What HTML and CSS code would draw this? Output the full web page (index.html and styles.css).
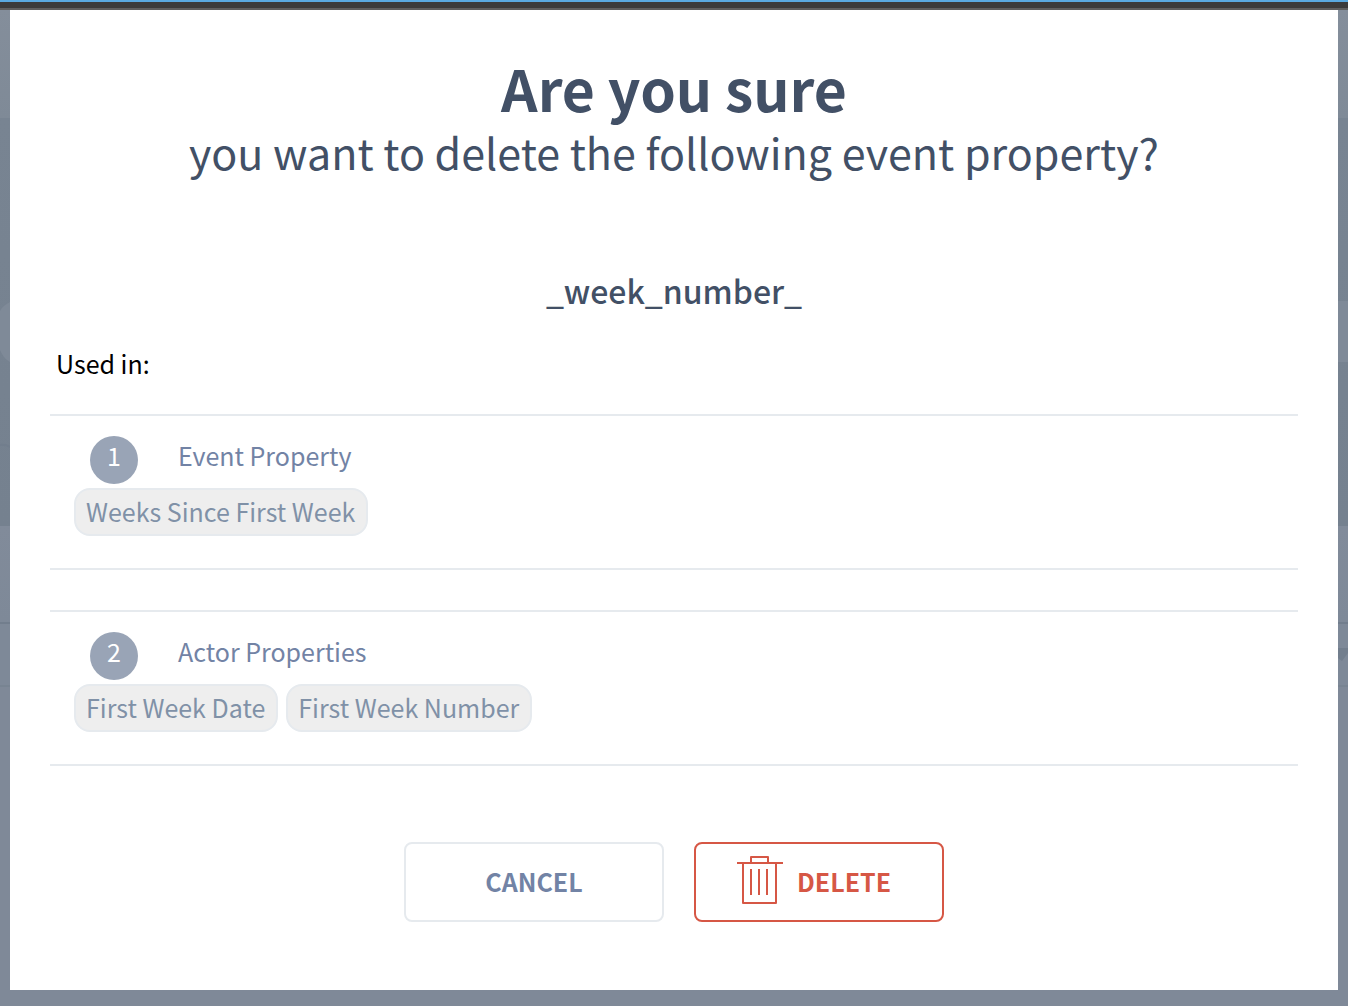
FILE: index.html
```html
<!DOCTYPE html>
<html lang="en">
<head>
<meta charset="utf-8">
<meta name="viewport" content="width=device-width, initial-scale=1">
<title>Delete event property</title>
<link rel="stylesheet" href="styles.css">
</head>
<body>
<div class="topbar"></div>
<div class="backdrop">
  <svg class="edge" viewBox="0 0 10 700" width="10" height="700" aria-hidden="true">
    <path fill="#7f8a98" d="M10 292C6 294 2 297 0 301V340C2 345 6 350 10 352Z"/>
    <path fill="none" stroke="#727e8d" stroke-width="2" d="M0 435Q5 434 10 437"/>
  </svg>
  <main class="dialog" role="dialog" aria-labelledby="dialog-title">
    <h1 class="title" id="dialog-title">Are you sure</h1>
    <p class="subtitle">you want to delete the following event property?</p>
    <h2 class="property">_week_number_</h2>
    <p class="used-in">Used in:</p>
    <section class="usage">
      <div class="usage-head">
        <span class="count">1</span>
        <h3 class="usage-name">Event Property</h3>
      </div>
      <ul class="tags">
        <li class="tag">Weeks Since First Week</li>
      </ul>
    </section>
    <section class="usage">
      <div class="usage-head">
        <span class="count">2</span>
        <h3 class="usage-name">Actor Properties</h3>
      </div>
      <ul class="tags">
        <li class="tag">First Week Date</li>
        <li class="tag">First Week Number</li>
      </ul>
    </section>
    <div class="actions">
      <button class="button cancel" type="button">CANCEL</button>
      <button class="button delete" type="button">
        <svg class="trash" viewBox="0 0 46 48" width="46" height="48" fill="none" stroke="currentColor" stroke-width="2" stroke-linejoin="round" aria-hidden="true">
          <path d="M0 7H46M14 7V1H31V7M6 7V47H39V7M14 13V39M22 13V39M30 13V39"/>
        </svg>
        <span>DELETE</span>
      </button>
    </div>
  </main>
  <svg class="edge" viewBox="0 0 10 700" width="10" height="700" aria-hidden="true">
    <path fill="#7f8a98" d="M0 291H10V352H0Z"/>
    <path fill="#727e8d" d="M0 638H10V643L4 651L0 648Z"/>
  </svg>
</div>
</body>
</html>
```
FILE: styles.css
```css
* {
  box-sizing: border-box;
}

body {
  margin: 0;
  min-height: 100vh;
  display: flex;
  flex-direction: column;
  background: #808a98;
  color: #000;
  font-family: "Noto Sans CJK SC", "Noto Sans", sans-serif;
  font-size: 25px;
  line-height: 38px;
}

h1, h2, h3, p, ul {
  margin: 0;
  padding: 0;
}

.topbar {
  height: 10px;
  background: #3b3b3b;
  border-top: 2px solid #5aa9e0;
  border-bottom: 2px solid #5f5f5f;
}

/* the dimmed page shows as a narrow strip on each side of the dialog */
.backdrop {
  flex: 1;
  display: flex;
  padding-bottom: 16px;
  background:
    linear-gradient(#848e9b 0, #7f8a97 108px, #788492 108px, #75818f 516px, #818b9a 516px, #7e8998 612px, #727e8d 612px, #727e8d 614px, #7e8998 614px, #7e8998 675px, #788492 675px, #788492 677px, #7f8998 677px);
}

.edge {
  flex: none;
}

.dialog {
  flex: 1;
  display: flex;
  flex-direction: column;
  background: #fff;
  padding: 45px 40px 68px;
}

.title,
.subtitle,
.property {
  color: #425066;
  text-align: center;
}

.title {
  font-size: 57px;
  font-weight: 700;
  line-height: 64px;
}

.subtitle {
  font-size: 43px;
  line-height: 64px;
}

.property {
  margin-top: 88px;
  font-size: 32px;
  font-weight: 500;
}

.used-in {
  margin: 35px 0 32px;
  padding: 0 6px;
}

.usage {
  border-top: 2px solid #e6eaee;
  border-bottom: 2px solid #e6eaee;
  padding: 20px 24px 32px;
}

.usage + .usage {
  margin-top: 40px;
}

.usage-head {
  display: flex;
  gap: 40px;
  padding-left: 16px;
}

.count {
  width: 48px;
  height: 48px;
  border-radius: 50%;
  background: #99a4b6;
  color: #fff;
  text-align: center;
}

.usage-name {
  color: #7283a5;
  font-size: 25px;
  font-weight: 400;
}

.tags {
  display: flex;
  flex-wrap: wrap;
  gap: 8px;
  margin-top: 4px;
  list-style: none;
}

.tag {
  height: 48px;
  border: 2px solid #e6eaee;
  border-radius: 16px;
  background: #eee;
  color: #8091a7;
  padding: 0 11px 0 10px;
  line-height: 42px;
}

.actions {
  display: flex;
  flex-wrap: wrap;
  justify-content: center;
  gap: 30px;
  margin-top: 76px;
}

.button {
  display: flex;
  align-items: center;
  justify-content: center;
  gap: 14px;
  height: 80px;
  padding: 0 0 2px;
  border: 2px solid;
  border-radius: 8px;
  background: #fff;
  font: inherit;
  font-weight: 700;
  cursor: pointer;
}

.cancel {
  width: 260px;
  border-color: #e6eaee;
  color: #7283a5;
}

.delete {
  width: 250px;
  padding-right: 10px;
  border-color: #d65745;
  color: #d65745;
}

.trash {
  margin-bottom: 2px;
}
```
